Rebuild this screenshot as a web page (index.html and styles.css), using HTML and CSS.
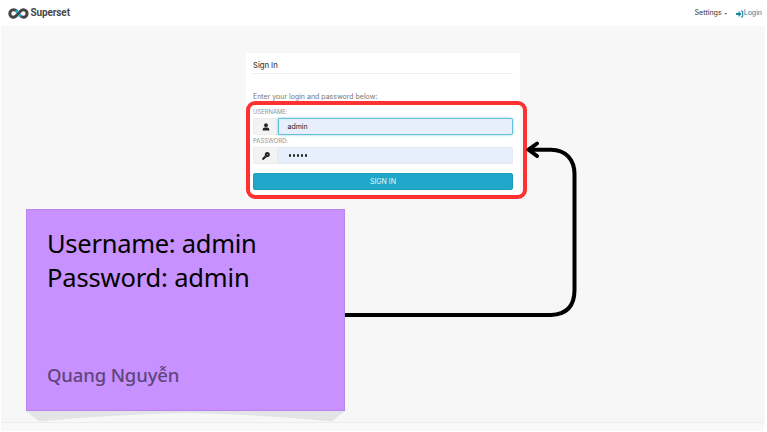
FILE: index.html
```html
<!DOCTYPE html>
<html lang="en">
<head>
<meta charset="utf-8">
<title>Superset</title>
<link rel="stylesheet" href="styles.css">
</head>
<body>
<header class="navbar">
  <div class="brand">
    <svg class="logo" width="21" height="11" viewBox="0 0 21 11" fill="none" stroke-width="3">
      <path stroke="#444" d="M9 3.200C7.700 2.100 6.600 1.800 5.500 1.800a3.700 3.700 0 0 0 0 7.400C9.500 9.200 11.300 1.800 15.400 1.800a3.700 3.700 0 0 1 0 7.400C14 9.200 13 8.400 12 7.500"/>
      <path stroke="#20a7c9" d="M7.800 2.200L9.800 4.200M11.200 6.700L13.200 8.600"/>
    </svg>
    <span class="brand-name">Superset</span>
  </div>
  <nav class="links">
    <span class="settings">Settings</span><i class="caret"></i>
    <svg class="login-icon" width="8" height="8" viewBox="0 0 8 8"><path fill="#1985a0" d="M0 2.900h2.500V.9L5.600 4 2.500 7.100v-2H0z"/><path fill="none" stroke="#1985a0" stroke-width="1.100" d="M4.700 1h1.200q.8 0 .8.800v4.400q0 .8-.8.800H4.700"/></svg>
    <span class="login">Login</span>
  </nav>
</header>
<main class="page">
  <form class="panel">
    <h1 class="title">Sign In</h1>
    <p class="hint">Enter your login and password below:</p>
    <label class="label">USERNAME:</label>
    <div class="field">
      <span class="addon"><svg width="8" height="8" viewBox="0 0 8 8" fill="#222"><circle cx="4" cy="2.200" r="1.900"/><path d="M.7 7.400V6.500q0-1.800 1.900-1.900h2.800q1.900.1 1.900 1.900v.9z"/></svg></span>
      <span class="input focused">admin</span>
    </div>
    <label class="label second">PASSWORD:</label>
    <div class="field">
      <span class="addon"><svg width="8" height="8" viewBox="0 0 8 8"><circle cx="5.300" cy="2.600" r="1.500" fill="none" stroke="#222" stroke-width="2"/><path fill="#222" d="M3 3.400L4.700 5.200 3.800 6.100H3v.8h-.9v.9H.2V6.200z"/></svg></span>
      <span class="input dots"><i></i><i></i><i></i><i></i><i></i></span>
    </div>
    <div class="submit">SIGN IN</div>
  </form>
</main>
<div class="highlight"></div>
<svg class="arrow" width="767" height="432" viewBox="0 0 767 432" fill="none" stroke="#000" stroke-width="4">
  <path d="M345 315H551Q574.500 314 574.500 290V174C574.500 160 566 149.700 551 149.700H529"/>
  <path stroke-linecap="round" stroke-linejoin="round" d="M537 143.500L528.500 149.700L537 156"/>
</svg>
<aside class="note">
  <p class="credentials"><span class="user-line">Username: admin</span><br><span class="pass-line">Password: admin</span></p>
  <p class="author">Quang Nguyễn</p>
</aside>
<svg class="note-shadow" width="319" height="11" viewBox="0 0 319 11" fill="#e3e4e6"><path d="M0 0H319L306 10.500Q230 3 160 2Q90 3 13 10.500Z"/></svg>
<footer class="footer"></footer>
</body>
</html>
```
FILE: styles.css
```css
* { box-sizing: border-box; }
body {
  margin: 0;
  width: 767px;
  height: 432px;
  overflow: hidden;
  position: relative;
  display: flex;
  flex-direction: column;
  background: #fff;
  color: #444;
  font: 7px/10px Inter, "Liberation Sans", sans-serif;
}
h1, p { margin: 0; font-weight: 400; }
.navbar {
  flex: 0 0 26px;
  display: flex;
  justify-content: space-between;
  padding: 0 5px 0 8px;
}
.brand, .links { display: flex; align-items: center; }
.brand { gap: 1.500px; }
.logo { margin: 0 .5px 0 -.5px; }
.brand-name { font: 700 10px/12px Roboto, sans-serif; letter-spacing: -.12px; color: #484848; }
.caret { width: 4px; height: 2px; margin: 1px 8px 0 2px; background: #555; clip-path: polygon(0 0, 100% 0, 50% 100%); }
.settings { color: #333; font-size: 7.100px; }
.login-icon { margin-top: 1px; }
.login { color: #1985a0; font-size: 7px; }
.page { flex: 1; margin: 0 2px 0 1px; background: #f7f7f7; padding: 27px 0 0 245px; }
.panel { width: 274px; height: 144px; padding: 7px 7px 0; background: #fff; border-radius: 2px; }
.title { height: 14px; border-bottom: 1px solid #ececec; font-size: 7.600px; line-height: 12px; font-weight: 500; color: #444; }
.hint { margin-top: 17px; font-size: 7px; line-height: 11px; color: #777; }
.label { display: block; height: 9px; margin-top: 7px; font-size: 5.900px; line-height: 6px; color: #8e9499; white-space: nowrap; }
.second { height: 9px; margin-top: 3px; line-height: 5px; }
.field { display: flex; height: 17px; }
.addon { width: 25px; display: flex; align-items: center; justify-content: center; background: #f3f3f3; border: 1px solid #ececec; border-radius: 2px 0 0 2px; }
.input { flex: 1; display: flex; align-items: center; padding-left: 8.500px; background: #e8effc; border: 1px solid #e3e8f2; border-radius: 0 2px 2px 0; color: #222; font-size: 7px; }
.focused { border-color: #66bfd8; box-shadow: 0 0 3px #8fd0e2; }
.dots { gap: 1.700px; padding-left: 10px; }
.dots i { width: 2.300px; height: 2.300px; border-radius: 50%; background: #222; }
.submit { height: 17px; margin-top: 9px; border-radius: 2px; background: #20a7c9; border: 1px solid #1b9cbd; color: #e6f7fb; text-align: center; font-size: 7px; line-height: 15px; }
.highlight { position: absolute; left: 246px; top: 101px; width: 281px; height: 97.500px; border: 4px solid #ff3131; border-radius: 9px; }
.arrow { position: absolute; left: 0; top: 0; }
.note {
  position: absolute;
  left: 26px;
  top: 209px;
  width: 319px;
  height: 202px;
  padding: 16px 20px 23px;
  display: flex;
  flex-direction: column;
  justify-content: space-between;
  background: #c791ff;
  border: 1px solid #b785eb;
  font-family: "Noto Sans", sans-serif;
}
.credentials { font-size: 25.500px; line-height: 34px; color: #000; white-space: nowrap; font-weight: 380; }
.user-line { letter-spacing: -.28px; }
.pass-line { letter-spacing: -.16px; }
.author { font-size: 18.500px; line-height: 24px; font-weight: 500; letter-spacing: -.15px; color: #5f457b; white-space: nowrap; }
.note-shadow { position: absolute; left: 26px; top: 411px; }
.footer { flex: 0 0 9px; margin: 0 3px 1px 1px; background: #f8f8f8; border-top: 1px solid #ececec; }
```
